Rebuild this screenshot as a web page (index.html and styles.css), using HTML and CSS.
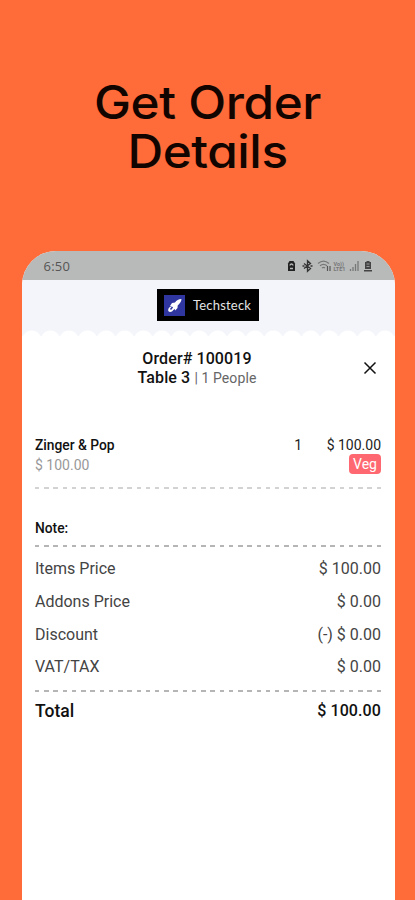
FILE: index.html
```html
<!DOCTYPE html>
<html lang="en">
  <head>
    <meta charset="UTF-8" />
    <meta name="viewport" content="width=device-width, initial-scale=1.0" />
    <title>Get Order Details</title>
    <link rel="stylesheet" href="styles.css">
  </head>

  <body>
    <h1>Get Order<br />Details</h1>

    <main class="phone">
      <div class="status-bar">
        <span class="clock">6:50</span>
        <svg class="status-icons" width="88" height="14" viewBox="0 0 88 14">
          <!-- battery saver -->
          <path d="M2 4.500 3.500 2h4L9 4.500V12H2z" fill="#222" />
          <path d="M4 6.500c0-2 3-2 3 0M4 9.500h3" stroke="#b8b9b9" stroke-width="1.300" fill="none" />
          <!-- bluetooth -->
          <path d="M18 4.500l6.500 5-3 2.700V1.800l3 2.700-6.500 5M16.500 7h2M24.500 7h2" stroke="#333" stroke-width="1.300" fill="none" />
          <!-- wifi -->
          <path d="M32 4.500c3.500-3 7.500-3 11 0M34 6.800c2.300-1.800 4.700-1.800 7 0M36 9c1-.8 2-.8 3 0" stroke="#777" stroke-width="1.300" fill="none" />
          <path d="M41.500 7v5M44 12V7" stroke="#555" stroke-width="1.200" />
          <text x="47.500" y="6.500" class="lte">Vo))</text>
          <text x="47.500" y="12" class="lte">LTE1</text>
          <!-- signal -->
          <path d="M64.500 12v-2M67 12V8M69.500 12V5M72 12V2" stroke="#777" stroke-width="1.300" />
          <!-- battery -->
          <path d="M79 3h1.500V2h3v1H85v7h-6zM78 11h8v1.500h-8z" fill="#444" />
          <path d="M80.500 5h3M80.500 7.500h3" stroke="#999" />
        </svg>
      </div>

      <header class="brand-bar">
        <div class="brand">
          <svg width="21" height="21" viewBox="0 0 21 21">
            <rect width="21" height="21" fill="#2f36a0" />
            <path d="M17.500 4c-3 0-5 1.500-6.500 3.500L8 8l-2 3 2 .2C5.500 11.500 3.800 13.500 4.300 16c1 1.500 4 1.200 5-1l1.500-1 .4 1.500 2.300-2.500.2-2.500c2-2 3.800-4 3.800-6.500z" fill="#fff" />
            <path d="M6.500 14.500l2-2.500" stroke="#2f36a0" stroke-width="1.500" />
          </svg>
          <span>Techsteck</span>
        </div>
      </header>

      <section class="order">
        <div class="order-head">
          <div class="order-id"><b>Order# 100019</b></div>
          <div class="order-table"><b>Table 3</b> <span>| 1 People</span></div>
          <svg class="close" width="14" height="14" viewBox="0 0 14 14">
            <path d="M1.500 1.500l11 11M12.500 1.500l-11 11" stroke="#111" stroke-width="1.500" />
          </svg>
        </div>

        <div class="item">
          <div class="item-info">
            <div class="item-name">Zinger &amp; Pop</div>
            <div class="item-price">$ 100.00</div>
          </div>
          <div class="item-qty">1</div>
          <div class="item-total">
            <div class="item-amount">$ 100.00</div>
            <span class="tag">Veg</span>
          </div>
        </div>
        <div class="dashes light"></div>

        <div class="note">Note:</div>
        <div class="dashes"></div>

        <div class="summary">
          <div class="row"><span>Items Price</span><span>$ 100.00</span></div>
          <div class="row"><span>Addons Price</span><span>$ 0.00</span></div>
          <div class="row"><span>Discount</span><span>(-) $ 0.00</span></div>
          <div class="row"><span>VAT/TAX</span><span>$ 0.00</span></div>
        </div>
        <div class="dashes"></div>

        <div class="total"><span>Total</span><span class="total-amount">$ 100.00</span></div>
      </section>
    </main>
  </body>
</html>
```

FILE: styles.css
```css
* {
  box-sizing: border-box;
}

body {
  margin: 0;
  height: 900px;
  overflow: hidden;
  background-color: #ff6b39;
  font-family: Roboto, "Liberation Sans", sans-serif;
  color: #222;
}

h1 {
  margin: 0;
  height: 251px;
  padding-top: 78px;
  text-align: center;
  font-family: Inter, "Open Sans", sans-serif;
  font-size: 46px;
  line-height: 48.5px;
  font-weight: 500;
  letter-spacing: -0.4px;
  font-feature-settings: "cv11";
  color: #120500;
  transform: scaleX(1.075);
}

.phone {
  width: 373px;
  height: 649px;
  margin-left: 21.5px;
  border-radius: 34px 34px 0 0;
  background-color: #fff;
  overflow: hidden;
}

.status-bar {
  display: flex;
  justify-content: space-between;
  align-items: center;
  height: 29px;
  padding: 0 21px 0 22px;
  background-color: #b8b9b9;
}

.clock {
  font-family: "Open Sans", sans-serif;
  font-size: 13px;
  letter-spacing: 0.2px;
  color: #555;
}

.lte {
  font: 700 5.5px Roboto, sans-serif;
  fill: #777;
}

.brand-bar {
  height: 56px;
  padding-top: 9px;
  /* scalloped paper edge */
  background: radial-gradient(circle at 50% 10px, #fff 9px, transparent 10px) 0.5px 50px / 18.6px 6px repeat-x, #f4f5fa;
}

.brand {
  display: flex;
  align-items: center;
  gap: 8px;
  width: 102px;
  height: 32px;
  margin: 0 auto;
  padding-left: 7px;
  background-color: #000;
  color: #e4e4e4;
  font-family: Lato, sans-serif;
  font-size: 13px;
  letter-spacing: 0.2px;
}

.order {
  padding: 0 13.5px;
}

.order-head {
  position: relative;
  height: 94px;
  padding: 13px 22px 0 0;
  text-align: center;
  font-size: 16px;
  line-height: 19px;
  letter-spacing: 0.1px;
  color: #111;
}

.order-head b {
  font-weight: 500;
}

.order-table span {
  font-size: 14px;
  color: #666;
}

.close {
  position: absolute;
  top: 25px;
  right: 4px;
}

.item {
  display: flex;
  height: 57px;
  padding-top: 5px;
  font-size: 14px;
  line-height: 20px;
}

.item-info {
  flex: 1;
}

.item-name {
  font-size: 13.8px;
  font-weight: 500;
  color: #111;
}

.item-price {
  line-height: 21px;
  color: #999;
}

.item-total {
  width: 79px;
  text-align: right;
}

.tag {
  display: block;
  width: 32px;
  height: 20px;
  margin-left: auto;
  margin-top: -1px;
  border-radius: 4px;
  background-color: #ff6870;
  color: #fff;
  font-size: 14px;
  line-height: 20px;
  text-align: center;
}

.dashes {
  height: 2px;
  background: repeating-linear-gradient(to right, #b5b5b5 0 4.5px, transparent 4.5px 9.23px);
}

.dashes.light {
  opacity: 0.6;
}

.note {
  height: 56px;
  padding-top: 29px;
  font-size: 13.8px;
  line-height: 20px;
  font-weight: 500;
  color: #111;
}

.summary {
  height: 143px;
  padding-top: 6px;
}

.row {
  display: flex;
  justify-content: space-between;
  font-size: 16px;
  line-height: 32.8px;
  color: #444;
}

.total {
  display: flex;
  justify-content: space-between;
  padding-top: 4px;
  font-size: 17.5px;
  line-height: 30px;
  font-weight: 500;
  color: #111;
}

.total-amount {
  font-size: 16px;
  letter-spacing: 0.1px;
}
```
